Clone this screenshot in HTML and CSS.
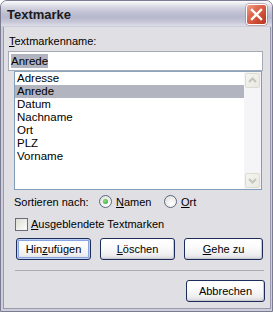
FILE: index.html
```html
<!DOCTYPE html>
<html>
<head>
<meta charset="utf-8">
<link rel="stylesheet" href="styles.css">
</head>
<body>
<div class="window">
  <div class="titlebar">
    <span class="title">Textmarke</span>
    <span class="close">
      <svg width="21" height="21" viewBox="0 0 21 21"><path d="M6 6 L15 15 M15 6 L6 15" stroke="#fff" stroke-width="2.4" stroke-linecap="square" fill="none"/></svg>
    </span>
  </div>
  <div class="frame">
    <div class="content">
      <div class="label"><u>T</u>extmarkenname:</div>
      <div class="textbox"><span class="sel">Anrede</span></div>
      <div class="listbox">
        <ul class="items">
          <li>Adresse</li>
          <li class="selected">Anrede</li>
          <li>Datum</li>
          <li>Nachname</li>
          <li>Ort</li>
          <li>PLZ</li>
          <li>Vorname</li>
        </ul>
        <div class="scrollbar">
          <div class="sbtn"><svg width="15" height="15" viewBox="0 0 15 15"><path d="M4 9 L7.5 5.5 L11 9" stroke="#c4c4bc" stroke-width="2" fill="none"/></svg></div>
          <div class="track"></div>
          <div class="sbtn"><svg width="15" height="15" viewBox="0 0 15 15"><path d="M4 6 L7.5 9.5 L11 6" stroke="#c4c4bc" stroke-width="2" fill="none"/></svg></div>
        </div>
      </div>
      <div class="sortrow">
        <span class="sortlabel">Sortieren nach:</span>
        <span class="radio-item r1"><span class="radio checked"></span><span><u>N</u>amen</span></span>
        <span class="radio-item"><span class="radio"></span><span><u>O</u>rt</span></span>
      </div>
      <div class="checkrow">
        <span class="checkbox"></span><span><u>A</u>usgeblendete Textmarken</span>
      </div>
      <div class="buttons">
        <span class="btn default">Hin<u>z</u>ufügen</span>
        <span class="btn"><u>L</u>öschen</span>
        <span class="btn wide"><u>G</u>ehe zu</span>
      </div>
      <div class="separator"></div>
      <div class="footer">
        <span class="btn wide">Abbrechen</span>
      </div>
    </div>
  </div>
</div>
</body>
</html>
```

FILE: styles.css
```css
html, body {
  margin: 0;
  padding: 0;
  background: #ffffff;
}
body {
  font-family: "Liberation Sans", Arial, sans-serif;
  font-size: 11px;
  color: #000;
}
u { text-decoration: underline; text-underline-offset: 1px; }

.window {
  width: 273px;
  height: 312px;
  box-sizing: border-box;
  border: 1px solid #7b7b92;
  border-radius: 7px 7px 0 0;
  background: #e0dfe3;
  display: flex;
  flex-direction: column;
  overflow: hidden;
}
.titlebar {
  height: 26px;
  flex: none;
  display: flex;
  align-items: center;
  justify-content: space-between;
  padding: 0 4px 0 6px;
  background: linear-gradient(#fdfdfe 0%, #eaeaf1 10%, #d0d0df 28%, #bcbdd1 50%, #b7b8cc 62%, #c8c8d9 82%, #dcdce7 94%, #c4c4d3 100%);
}
.title {
  font-weight: bold;
  font-size: 13px;
  color: #1a1a1a;
  padding-top: 1px;
}
.close {
  width: 21px;
  height: 21px;
  box-sizing: border-box;
  border-radius: 3px;
  border: 1px solid #ffffff;
  box-shadow: 0 0 0 0.5px #a07070;
  background: linear-gradient(135deg, #f2a08b 0%, #df6a50 35%, #c8452d 75%, #b43a28 100%);
  display: flex;
  margin-top: 1px;
  margin-right: 1px;
}
.close svg { margin: -1px; }

.frame {
  flex: 1;
  border-style: solid;
  border-color: #cdcddb;
  border-width: 0 2px 2px 2px;
  display: flex;
}
.content {
  flex: 1;
  border-style: solid;
  border-color: #9999ae;
  border-width: 0 1px 1px 1px;
  padding: 8px 7px 0 4px;
  display: flex;
  flex-direction: column;
}
.label {
  height: 13px;
  line-height: 13px;
  padding-left: 1px;
}
.textbox {
  margin-top: 3px;
  height: 20px;
  box-sizing: border-box;
  border: 1px solid #a5acb5;
  background: #fff;
  padding: 2px 2px;
  line-height: 14px;
  font-size: 11.5px;
}
.sel {
  background: #b2b4bf;
  padding: 1px 0;
}
.listbox {
  margin-left: 6px;
  margin-right: 1px;
  height: 119px;
  box-sizing: border-box;
  border: 1px solid #7f9db9;
  border-top-color: #8aa5c0;
  background: #fff;
  display: flex;
}
.items {
  list-style: none;
  margin: 0;
  padding: 0;
  flex: 1;
  font-size: 11.5px;
}
.items li {
  height: 13px;
  line-height: 13px;
  padding-left: 2px;
}
.items li.selected {
  background: #b2b4bf;
}
.scrollbar {
  width: 17px;
  background: #f5f5f8;
  display: flex;
  flex-direction: column;
  align-items: center;
  padding: 1px 0;
  box-sizing: border-box;
}
.sbtn {
  width: 15px;
  height: 15px;
  box-sizing: border-box;
  border: 1px solid #dcdcd3;
  border-radius: 2px;
  background: linear-gradient(135deg, #f6f6f1, #e9e9e2);
  display: flex;
}
.sbtn svg { margin: -1px; }
.track { flex: 1; }

.sortrow {
  margin-top: 3px;
  height: 17px;
  display: flex;
  align-items: center;
  padding-left: 6px;
}
.sortlabel { width: 85px; }
.radio-item {
  display: flex;
  align-items: center;
  gap: 4px;
}
.radio-item.r1 { width: 65px; }
.radio {
  width: 13px;
  height: 13px;
  box-sizing: border-box;
  border-radius: 50%;
  border: 1px solid #5c6a82;
  background: radial-gradient(circle at 65% 70%, #fff 0%, #f2f2f2 40%, #d8d8d2 100%);
  position: relative;
}
.radio.checked::after {
  content: "";
  position: absolute;
  left: 3px;
  top: 3px;
  width: 5px;
  height: 5px;
  border-radius: 50%;
  background: radial-gradient(circle at 40% 40%, #8fe08a, #21a121);
}

.checkrow {
  margin-top: 7px;
  height: 14px;
  display: flex;
  align-items: center;
  gap: 3px;
  padding-left: 7px;
}
.checkbox {
  width: 13px;
  height: 13px;
  box-sizing: border-box;
  border: 1px solid #6a6a7a;
  background: linear-gradient(135deg, #dcdcd6 0%, #f0f0ec 60%, #fbfbfb 100%);
}

.buttons {
  margin-top: 7px;
  display: flex;
  padding-left: 8px;
  gap: 9px;
}
.btn {
  width: 75px;
  height: 22px;
  box-sizing: border-box;
  border: 1px solid #1d2d5a;
  border-radius: 3px;
  background: linear-gradient(#ffffff 0%, #fbfbfb 40%, #eeeef0 80%, #d8d8dc 100%);
  display: flex;
  align-items: center;
  justify-content: center;
  box-shadow: inset -1px -1px 0 #c9c9cf;
}
.btn.wide { width: 79px; }
.btn.default {
  box-shadow: inset 0 0 0 1px #bccff0, inset 0 0 0 2px #8aa6e0;
}
.separator {
  margin-top: 10px;
  margin-left: 7px;
  margin-right: -1px;
  border-top: 1px solid #acacb3;
  height: 0;
}
.footer {
  margin-top: 9px;
  display: flex;
  justify-content: flex-end;
  margin-right: -2px;
}
```
